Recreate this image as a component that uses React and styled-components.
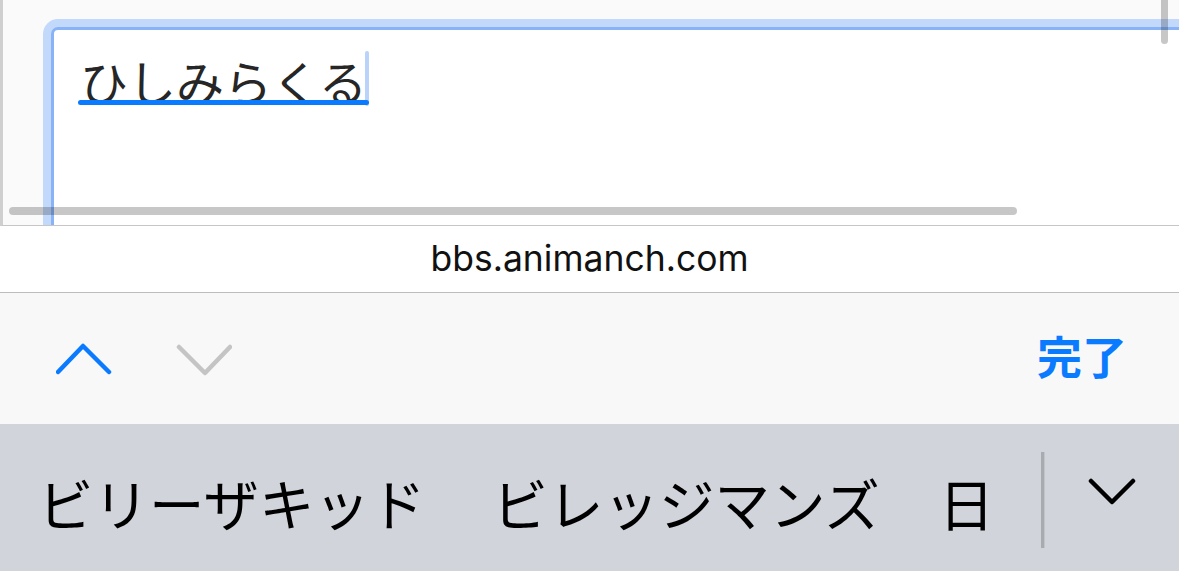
import React from "react";
import styled, { createGlobalStyle } from "styled-components";

const GlobalStyle = createGlobalStyle`
  html, body {
    margin: 0;
    padding: 0;
    background: #ffffff;
  }
  body {
    font-family: "Noto Sans CJK JP", "Noto Sans", sans-serif;
  }
  * {
    box-sizing: border-box;
  }
`;

const Screen = styled.div`
  width: 1179px;
  height: 571px;
  display: flex;
  flex-direction: column;
  overflow: hidden;
`;

const PageView = styled.div`
  position: relative;
  height: 226px;
  flex: none;
  overflow: hidden;
  background: #fafafa;
  border-left: 3px solid #cfcfcf;
  border-bottom: 1px solid #c6c6c6;
  padding: 27px 0 0 48px;
`;

const Field = styled.div`
  width: 1200px;
  height: 320px;
  background: #ffffff;
  border: 3px solid #88b4f7;
  border-radius: 7px;
  box-shadow: 0 0 0 8px #c2d9fb;
  padding: 26px 0 0 26px;
`;

const Composing = styled.span`
  position: relative;
  display: inline-block;
  font-size: 48px;
  line-height: 48px;
  color: #262626;
  padding-right: 2px;

  &::after {
    content: "";
    position: absolute;
    left: -2px;
    right: 0;
    top: 44px;
    height: 5px;
    border-radius: 3px;
    background: #0a7aff;
  }
`;

const Caret = styled.span`
  position: absolute;
  right: 0;
  top: -5px;
  width: 4px;
  height: 55px;
  border-radius: 2px;
  background: #b9d3fb;
`;

const HScroll = styled.div`
  position: absolute;
  left: 6px;
  top: 207px;
  width: 1008px;
  height: 8px;
  border-radius: 4px;
  background: rgba(0, 0, 0, 0.22);
`;

const VScroll = styled.div`
  position: absolute;
  left: 1158px;
  top: -6px;
  width: 7px;
  height: 50px;
  border-radius: 4px;
  background: rgba(0, 0, 0, 0.22);
`;

const UrlBar = styled.div`
  height: 67px;
  flex: none;
  display: flex;
  align-items: center;
  justify-content: center;
  background: #ffffff;
  border-bottom: 1px solid #bdbdbd;
  font-family: "Inter", "Liberation Sans", sans-serif;
  font-size: 35.5px;
  color: #111;
  padding-bottom: 2px;
`;

const Toolbar = styled.div`
  height: 131px;
  flex: none;
  display: flex;
  align-items: center;
  background: #f8f8f8;
  padding: 0 52px 0 56px;
`;

const NavButton = styled.button`
  border: none;
  background: none;
  padding: 0;
  margin-right: 64px;
  width: 56px;
  height: 34px;
  display: flex;
  cursor: pointer;
  svg {
    display: block;
  }
`;

const Done = styled.button`
  margin-left: auto;
  border: none;
  background: none;
  padding: 0;
  font-family: "Noto Sans CJK JP", sans-serif;
  font-weight: 700;
  font-size: 45px;
  line-height: 1;
  color: #0a7aff;
  margin-top: -6px;
`;

const Candidates = styled.div`
  flex: 1;
  display: flex;
  align-items: center;
  background: #d1d4da;
  padding-left: 38px;
`;

const Candidate = styled.span`
  font-family: "Noto Sans CJK JP", sans-serif;
  font-size: 55.5px;
  line-height: 1;
  color: #000;
  margin-right: ${(p) => p.$gap}px;
  margin-top: 10px;
  white-space: nowrap;
`;

const Divider = styled.div`
  width: 4px;
  height: 96px;
  margin-left: auto;
  margin-top: 4px;
  background: #a9abb0;
  border-right: 1px solid #c2c4c8;
`;

const Expand = styled.div`
  width: 134px;
  display: flex;
  justify-content: center;
  margin-top: -14px;
`;

const Chevron = ({ up, color }) => (
  <svg width="56" height="34" viewBox="0 0 56 34">
    <polyline
      points={up ? "2,30 27,4 53,30" : "3,5 29,31 54,5"}
      fill="none"
      stroke={color}
      strokeWidth="4.5"
      strokeLinecap="round"
      strokeLinejoin="round"
    />
  </svg>
);

export default function App() {
  return (
    <>
      <GlobalStyle />
      <Screen>
        <PageView>
          <Field>
            <Composing>
              ひしみらくる
              <Caret />
            </Composing>
          </Field>
          <HScroll />
          <VScroll />
        </PageView>
        <UrlBar>bbs.animanch.com</UrlBar>
        <Toolbar>
          <NavButton>
            <Chevron up color="#0a7aff" />
          </NavButton>
          <NavButton>
            <Chevron color="#c4c4c4" />
          </NavButton>
          <Done>完了</Done>
        </Toolbar>
        <Candidates>
          <Candidate $gap={67}>ビリーザキッド</Candidate>
          <Candidate $gap={59}>ビレッジマンズ</Candidate>
          <Candidate $gap={0}>日</Candidate>
          <Divider />
          <Expand>
            <svg width="48" height="28" viewBox="0 0 48 28">
              <polyline
                points="3,4 24,25 45,4"
                fill="none"
                stroke="#000"
                strokeWidth="4.5"
                strokeLinecap="round"
                strokeLinejoin="round"
              />
            </svg>
          </Expand>
        </Candidates>
      </Screen>
    </>
  );
}
